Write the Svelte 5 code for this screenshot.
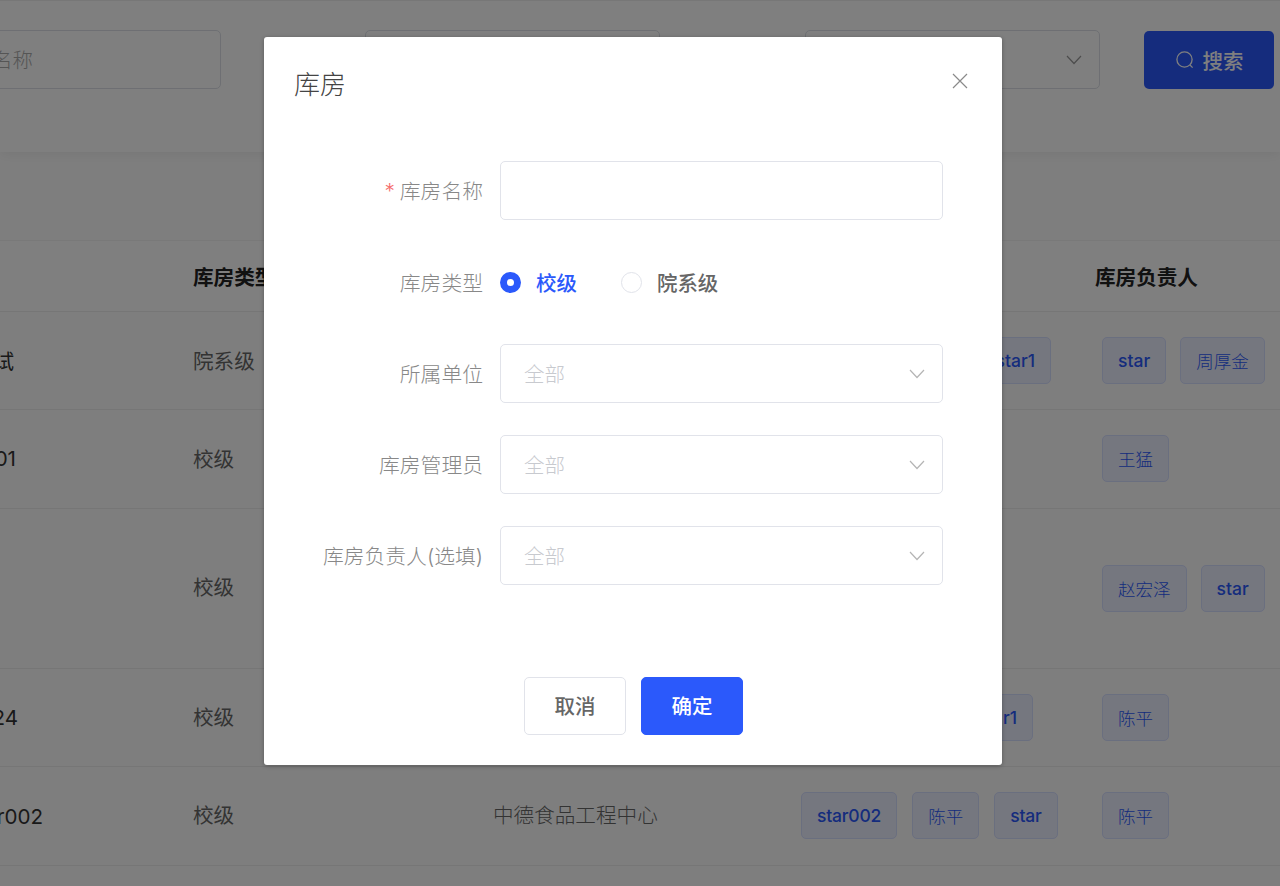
<script>
  const rows = [
    { name: '试', type: '院系级', unit: '', admins: [{ t: 'star1', hidden: true }], owners: ['star', '周厚金'], cls: 'r1' },
    { name: '01', type: '校级', unit: '', admins: [], owners: ['王猛'], cls: 'r2' },
    { name: '', type: '校级', unit: '', admins: [], owners: ['赵宏泽', 'star'], cls: 'r3' },
    { name: '24', type: '校级', unit: '', admins: [{ t: 'r1', hidden: true }], owners: ['陈平'], cls: 'r4' },
    { name: 'r002', type: '校级', unit: '中德食品工程中心', admins: [{ t: 'star002' }, { t: '陈平' }, { t: 'star' }], owners: ['陈平'], cls: 'r5' }
  ];
  const isLatin = (s) => /^[a-z0-9]+$/i.test(s);
</script>

<div class="page">
  <section class="filters">
    <div class="field f1"><span class="ph">名称</span></div>
    <div class="field f2"></div>
    <div class="field f3">
      <svg class="chev" viewBox="0 0 16 10" width="16" height="10"><path d="M1 1l7 7.5L15 1" fill="none" stroke="#999" stroke-width="1.2" /></svg>
    </div>
    <button class="search">
      <svg viewBox="0 0 20 20" width="20" height="20"><circle cx="9.5" cy="9.5" r="7.6" fill="none" stroke="#fff" stroke-width="1.3" /><path d="M15 15l2.6 2.6" stroke="#fff" stroke-width="1.3" fill="none" /></svg>
      <span>搜索</span>
    </button>
  </section>

  <section class="table">
    <div class="row head">
      <div class="c0"></div>
      <div class="c1">库房类型</div>
      <div class="c2"></div>
      <div class="c3"></div>
      <div class="c4">库房负责人</div>
    </div>
    {#each rows as r}
      <div class="row {r.cls}">
        <div class="c0 nm">{r.name}</div>
        <div class="c1">{r.type}</div>
        <div class="c2">{r.unit}</div>
        <div class="c3 tags" class:end={r.admins[0]?.hidden}>
          {#each r.admins as a}
            <span class="tag" class:latin={isLatin(a.t)}>{a.t}</span>
          {/each}
        </div>
        <div class="c4 tags">
          {#each r.owners as o}
            <span class="tag" class:latin={isLatin(o)}>{o}</span>
          {/each}
        </div>
      </div>
    {/each}
  </section>

  <div class="overlay"></div>

  <div class="modal">
    <header class="mhead">
      <h2>库房</h2>
      <svg class="close" viewBox="0 0 16 16" width="16" height="16"><path d="M1 1l14 14M15 1L1 15" stroke="#8a8a8a" stroke-width="1.2" fill="none" /></svg>
    </header>
    <div class="form">
      <div class="item i1">
        <span class="label"><i>*</i>库房名称</span>
        <div class="input"></div>
      </div>
      <div class="item i2">
        <span class="label">库房类型</span>
        <div class="radios">
          <span class="radio on"><b></b>校级</span>
          <span class="radio"><b></b>院系级</span>
        </div>
      </div>
      <div class="item i3">
        <span class="label">所属单位</span>
        <div class="input"><span class="hint">全部</span><svg viewBox="0 0 16 10" width="16" height="10"><path d="M1 1l7 7.5L15 1" fill="none" stroke="#b5b5b5" stroke-width="1.2" /></svg></div>
      </div>
      <div class="item i3">
        <span class="label">库房管理员</span>
        <div class="input"><span class="hint">全部</span><svg viewBox="0 0 16 10" width="16" height="10"><path d="M1 1l7 7.5L15 1" fill="none" stroke="#b5b5b5" stroke-width="1.2" /></svg></div>
      </div>
      <div class="item i3">
        <span class="label">库房负责人(选填)</span>
        <div class="input"><span class="hint">全部</span><svg viewBox="0 0 16 10" width="16" height="10"><path d="M1 1l7 7.5L15 1" fill="none" stroke="#b5b5b5" stroke-width="1.2" /></svg></div>
      </div>
    </div>
    <footer class="mfoot">
      <button class="btn">取消</button>
      <button class="btn primary">确定</button>
    </footer>
  </div>
</div>

<style>
  :global(body) { margin: 0; overflow: hidden; }
  .page {
    position: relative;
    width: 1280px;
    height: 886px;
    overflow: hidden;
    background: #fdfdfd;
    font-family: Inter, "Noto Sans CJK SC", "Noto Sans", sans-serif;
    font-size: 20.48px;
    color: #666;
  }
  .filters {
    box-sizing: border-box;
    height: 152px;
    padding: 30px 0 0;
    display: flex;
    align-items: flex-start;
    background: #fff;
    border-top: 1px solid #eee;
    box-shadow: 0 2px 12px rgba(0, 0, 0, 0.07);
  }
  .field {
    box-sizing: border-box;
    height: 59px;
    border: 1px solid #dcdfe6;
    border-radius: 5px;
    display: flex;
    align-items: center;
    flex: none;
    margin-top: -1px;
  }
  .f1 { width: 300px; margin-left: -79px; padding-left: 70px; }
  .ph { color: #aaa; font-weight: 300; white-space: nowrap; margin-bottom: 2px; }
  .f2 { width: 295px; margin-left: 144px; }
  .f3 { width: 295px; margin-left: 145px; justify-content: flex-end; padding-right: 17px; }
  .search {
    box-sizing: border-box;
    width: 130px;
    height: 58px;
    margin-left: 44px;
    border: 0;
    border-radius: 5px;
    background: #2b59fb;
    color: #fff;
    font: inherit;
    font-weight: 500;
    display: flex;
    align-items: center;
    justify-content: center;
    gap: 8px;
    flex: none;
    padding: 0;
  }
  .table { margin-top: 88px; }
  .row {
    display: flex;
    align-items: center;
    border-bottom: 1px solid #ececec;
    box-sizing: border-box;
    color: #666;
    font-size: 20.6px;
  }
  .head { height: 72px; border-top: 1px solid #f2f2f2; color: #222; font-weight: 700; background: #fff; }
  .head .c4 { margin-left: -7px; }
  .r1 { height: 98px; }
  .r2 { height: 99px; }
  .r3 { height: 160px; }
  .r4 { height: 98px; }
  .r5 { height: 99px; }
  .c0 { width: 193px; flex: none; box-sizing: border-box; white-space: nowrap; display: flex; justify-content: flex-end; }
  .nm { color: #333; }
  .r1 .nm { padding-right: 179px; }
  .r2 .nm { padding-right: 177px; }
  .r3 .nm { padding-right: 177px; }
  .r4 .nm { padding-right: 175px; }
  .r5 .nm { padding-right: 150px; }
  .c1 { width: 300px; flex: none; }
  .c2 { width: 308px; flex: none; white-space: nowrap; font-weight: 300; }
  .c3 { width: 301px; flex: none; }
  .c4 { flex: 1; white-space: nowrap; }
  .r1 .c0, .r1 .c1, .r2 .c0, .r2 .c1, .r2 .c4, .r5 .c3, .r5 .c4 { margin-bottom: 2px; }
  .r3 .c1 { margin-bottom: 6px; }
  .r4 .c1, .r5 .c1, .r5 .c2 { margin-bottom: 4px; }
  .tags { display: flex; align-items: center; gap: 14px; }
  .r5 .c3 { gap: 15px; }
  .r5 .c3 .latin { letter-spacing: -0.2px; }
  .end { justify-content: flex-end; padding-right: 51px; box-sizing: border-box; }
  .r4 .end { padding-right: 69px; }
  .tag {
    box-sizing: border-box;
    height: 47px;
    padding: 0 15px;
    display: inline-flex;
    align-items: center;
    border: 1px solid #d5deff;
    border-radius: 5px;
    background: #eaeefe;
    color: #2b59fb;
    font-size: 17.5px;
    font-weight: 300;
    white-space: nowrap;
  }
  .tag.latin { font-weight: 500; }
  .overlay {
    position: absolute;
    inset: 0;
    background: rgba(0, 0, 0, 0.5);
  }
  .modal {
    position: absolute;
    left: 264px;
    top: 37px;
    width: 738px;
    height: 728px;
    box-sizing: border-box;
    background: #fff;
    border-radius: 3px;
    box-shadow: 0 1px 4px rgba(0, 0, 0, 0.3);
    display: flex;
    flex-direction: column;
  }
  .mhead {
    box-sizing: border-box;
    height: 124px;
    padding: 27px 34px 0 30px;
    display: flex;
    justify-content: space-between;
    align-items: flex-start;
    flex: none;
  }
  h2 { margin: 0; font-size: 26px; line-height: 41px; font-weight: 300; color: #444; }
  .close { margin-top: 9px; }
  .form { flex: 1; }
  .item { display: flex; align-items: center; }
  .i1 { height: 59px; margin-bottom: 32px; }
  .i2 { height: 60px; margin-bottom: 32px; }
  .i3 { height: 59px; margin-bottom: 32px; }
  .label {
    width: 219px;
    flex: none;
    box-sizing: border-box;
    text-align: right;
    color: #888;
    font-size: 20.8px;
    font-weight: 300;
    white-space: nowrap;
    margin-bottom: 2px;
  }
  .i2 .label { margin-bottom: 0; }
  .label i { color: #f56c6c; font-style: normal; margin-right: 5px; }
  .input {
    box-sizing: border-box;
    width: 443px;
    height: 59px;
    margin-left: 17px;
    border: 1px solid #e1e3ea;
    border-radius: 5px;
    display: flex;
    align-items: center;
    justify-content: space-between;
    padding: 0 17px 0 23px;
  }
  .hint { color: #c8cacf; font-weight: 300; margin-bottom: 2px; }
  .radios { display: flex; margin-left: 17px; gap: 44px; }
  .radio { display: flex; align-items: center; gap: 15px; color: #666; font-weight: 500; }
  .radio b {
    box-sizing: border-box;
    width: 21px;
    height: 21px;
    border-radius: 50%;
    border: 1px solid #e1e3ea;
    background: #fff;
    flex: none;
  }
  .radio.on { color: #2b59fb; }
  .radio.on b { border: 7px solid #2b59fb; }
  .mfoot {
    display: flex;
    justify-content: flex-start;
    gap: 15px;
    padding: 0 0 30px 260px;
    flex: none;
  }
  .btn {
    box-sizing: border-box;
    width: 102px;
    height: 58px;
    border: 1px solid #e1e3ea;
    border-radius: 5px;
    background: #fff;
    color: #666;
    font: inherit;
    font-weight: 500;
    padding: 0 0 2px;
  }
  .primary { background: #2b59fb; border-color: #2b59fb; color: #fff; }
</style>
